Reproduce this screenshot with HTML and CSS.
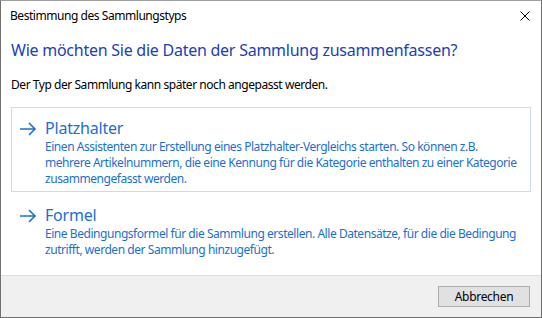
FILE: index.html
```html
<!DOCTYPE html>
<html lang="de">
<head>
<meta charset="utf-8">
<link rel="stylesheet" href="styles.css">
</head>
<body>
<div class="window">
  <div class="titlebar">
    <span class="title">Bestimmung des Sammlungstyps</span>
    <svg class="close" width="10" height="10" viewBox="0 0 10 10"><path d="M0.5 0.5 L9.5 9.5 M9.5 0.5 L0.5 9.5" stroke="#000" stroke-width="1" fill="none"/></svg>
  </div>
  <div class="content">
    <h1 class="instruction">Wie möchten Sie die Daten der Sammlung zusammenfassen?</h1>
    <p class="info">Der Typ der Sammlung kann später noch angepasst werden.</p>
    <div class="link hovered">
      <svg class="arrow" width="18" height="14" viewBox="0 0 18 14"><path d="M1 7 H16 M10 1 L16 7 L10 13" stroke="#1e6fd0" stroke-width="1.6" fill="none"/></svg>
      <div class="link-text">
        <div class="link-title">Platzhalter</div>
        <div class="link-desc">Einen Assistenten zur Erstellung eines Platzhalter-Vergleichs starten. So können z.B.<br>mehrere Artikelnummern, die eine Kennung für die Kategorie enthalten zu einer Kategorie<br>zusammengefasst werden.</div>
      </div>
    </div>
    <div class="link second">
      <svg class="arrow" width="18" height="14" viewBox="0 0 18 14"><path d="M1 7 H16 M10 1 L16 7 L10 13" stroke="#1e6fd0" stroke-width="1.6" fill="none"/></svg>
      <div class="link-text">
        <div class="link-title">Formel</div>
        <div class="link-desc">Eine Bedingungsformel für die Sammlung erstellen. Alle Datensätze, für die die Bedingung<br>zutrifft, werden der Sammlung hinzugefügt.</div>
      </div>
    </div>
  </div>
  <div class="footer">
    <button class="btn">Abbrechen</button>
  </div>
</div>
</body>
</html>
```
FILE: styles.css
```css
* { box-sizing: border-box; }
html, body { margin: 0; padding: 0; }
body {
  width: 542px;
  height: 318px;
  font-family: "Noto Sans", "Open Sans", sans-serif;
  font-size: 12px;
  letter-spacing: -0.45px;
  color: #000;
  background: #fff;
}
.window {
  width: 542px;
  height: 318px;
  border: 1px solid #707070;
  border-top-color: #a0a0a0;
  display: flex;
  flex-direction: column;
  background: #fff;
}
.titlebar {
  height: 30px;
  flex: none;
  display: flex;
  align-items: center;
  justify-content: space-between;
  padding: 0 11px 0 9px;
}
.title { font-size: 12px; line-height: 16px; }
.close { display: block; }
.content {
  flex: 1;
  padding: 8px 10px 0 10px;
}
.instruction {
  margin: 0;
  font-weight: normal;
  font-size: 16px;
  letter-spacing: -0.25px;
  line-height: 22px;
  color: #1b40b8;
}
.info {
  margin: 16px 0 0 0;
  line-height: 16px;
}
.link {
  display: flex;
  gap: 8px;
  margin-top: 14px;
  padding: 9px 6px 4px 7px;
  border: 1px solid transparent;
}
.link.second { margin-top: 0; padding-top: 11px; }
.link.hovered { border-color: #c6dcef; }
.arrow { flex: none; margin-top: 5px; }
.link-title {
  font-size: 16px;
  letter-spacing: -0.2px;
  line-height: 22px;
  color: #1a6fd3;
}
.link-desc {
  color: #1a6fd3;
  line-height: 16px;
  white-space: nowrap;
}
.footer {
  height: 42px;
  flex: none;
  background: #f0f0f0;
  border-top: 1px solid #dfdfdf;
  display: flex;
  justify-content: flex-end;
  align-items: flex-start;
  padding: 10px 11px 0 0;
}
.btn {
  width: 92px;
  height: 21px;
  font-family: inherit;
  font-size: 12px;
  letter-spacing: -0.3px;
  background: #e1e1e1;
  border: 1px solid #adadad;
  color: #000;
  padding: 0;
}
```
